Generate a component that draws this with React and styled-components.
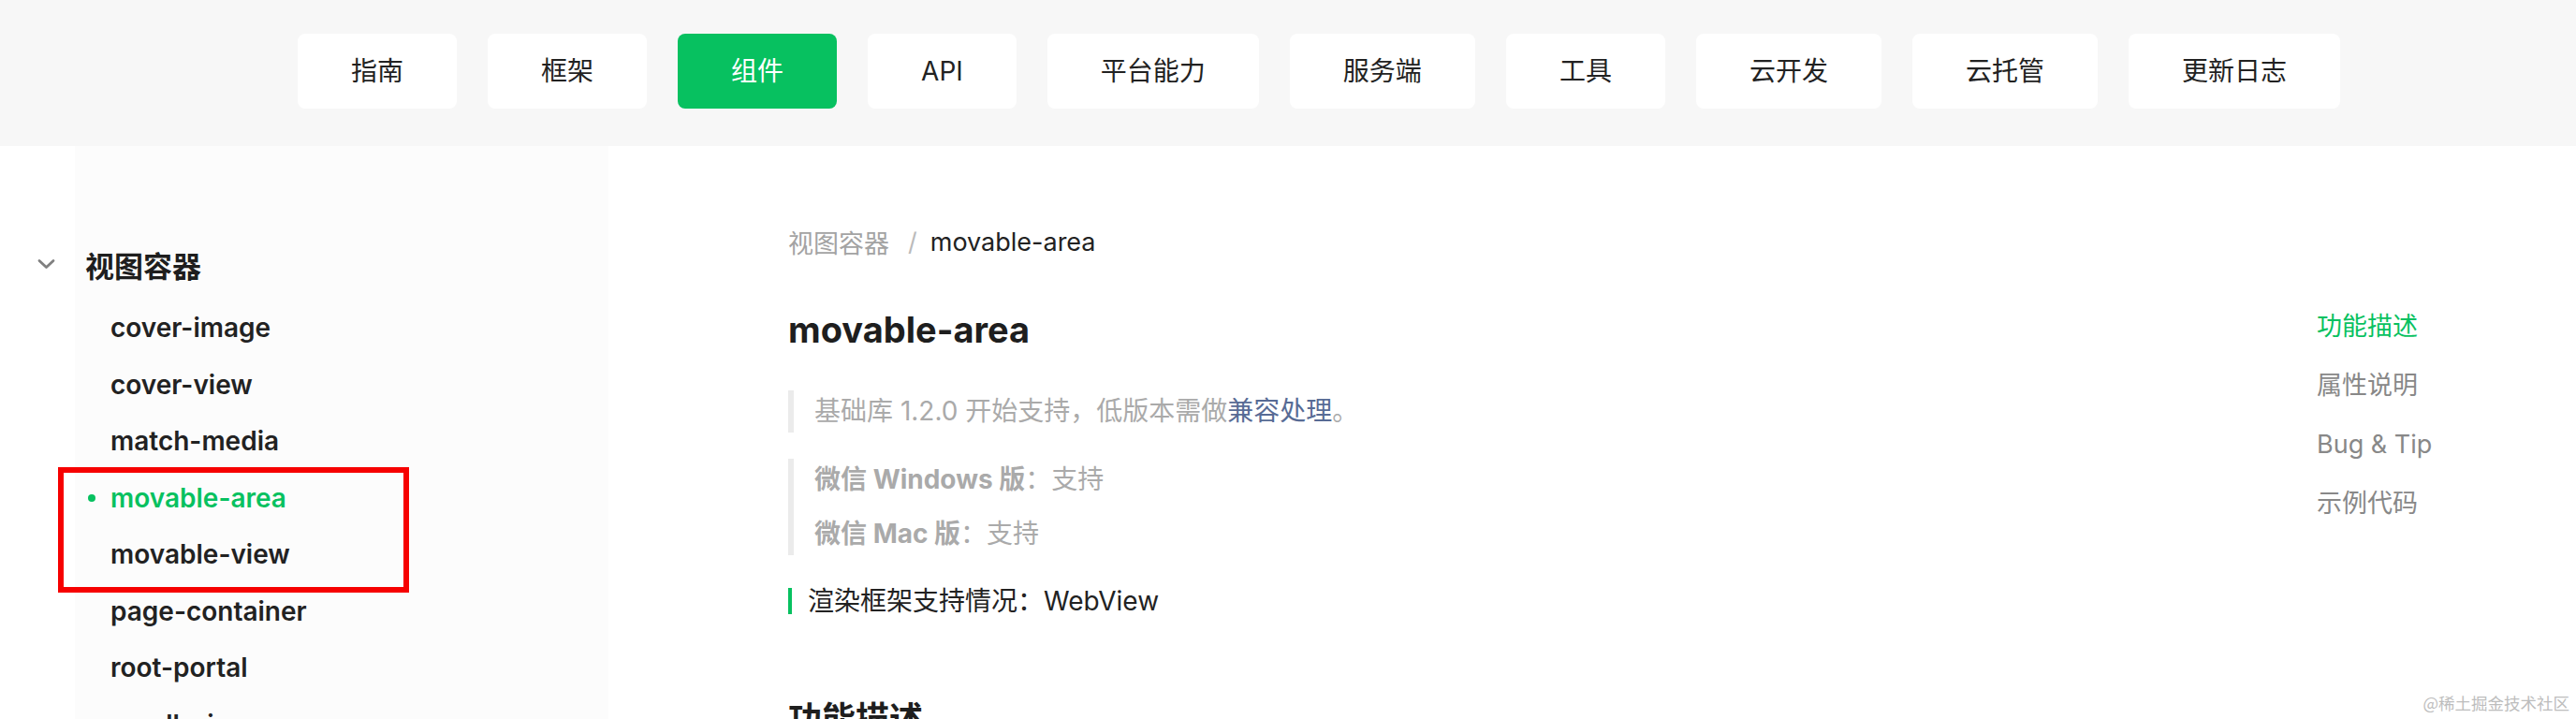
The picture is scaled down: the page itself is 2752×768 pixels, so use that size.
import React from "react";
import styled, { createGlobalStyle } from "styled-components";

const GlobalStyle = createGlobalStyle`
  html, body {
    margin: 0;
    padding: 0;
    background: #fff;
  }
  body {
    font-family: Inter, "Noto Sans CJK SC", "Noto Sans", sans-serif;
    color: #222;
    -webkit-font-smoothing: antialiased;
  }
  *, *::before, *::after {
    box-sizing: border-box;
  }
`;

const green = "#07c160";

const Page = styled.div`
  position: relative;
  height: 100vh;
  display: flex;
  flex-direction: column;
  overflow: hidden;
`;

const Header = styled.header`
  height: 156px;
  flex-shrink: 0;
  background: #f7f7f7;
  display: flex;
  justify-content: center;
  align-items: flex-start;
  padding: 36px 0 0 66px;
  gap: 33px;
`;

const NavButton = styled.a`
  height: 80px;
  padding: 0 57px;
  display: flex;
  align-items: center;
  border-radius: 8px;
  font-size: 28px;
  line-height: 1;
  background: ${(p) => (p.$active ? green : "#fff")};
  color: ${(p) => (p.$active ? "#fff" : "#222")};
  text-decoration: none;
  white-space: nowrap;
`;

const Body = styled.div`
  flex: 1;
  display: flex;
`;

const Sidebar = styled.aside`
  width: 650px;
  flex-shrink: 0;
  background: linear-gradient(to right, #fff 80px, #fcfcfc 80px);
  padding-top: 96px;
`;

const GroupTitle = styled.div`
  height: 60px;
  display: flex;
  align-items: center;
  padding-left: 40px;
  margin-bottom: 8px;
  font-size: 31px;
  font-weight: 700;
  color: #1e1e1e;

  svg {
    margin-right: 32px;
  }
`;

const Item = styled.div`
  height: 60.5px;
  display: flex;
  align-items: center;
  padding-left: 94px;
  font-size: 28px;
  font-weight: 600;
  color: ${(p) => (p.$active ? green : "#222")};
`;

const Marker = styled.span`
  width: 8px;
  height: 8px;
  border-radius: 50%;
  margin-right: 16px;
  background: ${(p) => (p.$active ? green : "transparent")};
`;

const Highlight = styled.div`
  position: relative;

  &::after {
    content: "";
    position: absolute;
    left: 62px;
    width: 375px;
    top: -3px;
    bottom: -10px;
    border: 6px solid #f60000;
    pointer-events: none;
  }
`;

const Main = styled.main`
  flex: 1;
  padding: 82px 0 0 192px;
`;

const Breadcrumb = styled.div`
  display: flex;
  align-items: center;
  height: 40px;
  font-size: 27px;
  color: #a3a3a3;
`;

const Sep = styled.span`
  margin: 0 14px 0 20px;
  color: #bbb;
`;

const Current = styled.span`
  color: #222;
`;

const Title = styled.h1`
  margin: 46px 0 0;
  font-size: 38px;
  line-height: 56px;
  font-weight: 700;
  color: #1e1e1e;
`;

const Quote = styled.blockquote`
  margin: ${(p) => p.$mt}px 0 0;
  padding: 0 0 0 22px;
  border-left: 6px solid #ebebeb;
  color: #aaa;
  font-size: 28px;

  p {
    margin: 0;
    line-height: 45px;
  }

  p + p {
    margin-top: 13px;
  }

  strong {
    font-weight: 700;
  }

  a {
    color: #576b95;
    text-decoration: none;
  }
`;

const RenderNote = styled.div`
  margin-top: 35px;
  border-left: 4px solid ${green};
  padding-left: 17px;
  height: 28px;
  line-height: 28px;
  font-size: 28px;
  color: #222;
`;

const SectionTitle = styled.h2`
  margin: 87px 0 0;
  font-size: 36px;
  line-height: 50px;
  font-weight: 700;
  color: #1e1e1e;
`;

const Toc = styled.nav`
  width: 277px;
  flex-shrink: 0;
  padding-top: 161px;
`;

const TocLink = styled.div`
  height: 63px;
  line-height: 63px;
  font-size: 27px;
  color: ${(p) => (p.$active ? green : "#888")};
`;

const Watermark = styled.div`
  position: absolute;
  right: 7px;
  bottom: 5px;
  font-family: "Noto Sans CJK SC", sans-serif;
  font-size: 17.5px;
  color: #bdbdbd;
  text-shadow: 0 0 2px #fff;
`;

const Chevron = () => (
  <svg width="19" height="12" viewBox="0 0 19 12">
    <polyline
      points="2,2.5 9.5,9.5 17,2.5"
      fill="none"
      stroke="#808080"
      strokeWidth="2.8"
      strokeLinecap="round"
      strokeLinejoin="round"
    />
  </svg>
);

const navs = ["指南", "框架", "组件", "API", "平台能力", "服务端", "工具", "云开发", "云托管", "更新日志"];

const before = ["cover-image", "cover-view", "match-media"];
const after = ["page-container", "root-portal", "scroll-view"];

const toc = ["功能描述", "属性说明", "Bug & Tip", "示例代码"];

const App = () => {
  return (
    <Page>
      <GlobalStyle />
      <Header>
        {navs.map((n) => (
          <NavButton key={n} $active={n === "组件"}>{n}</NavButton>
        ))}
      </Header>
      <Body>
        <Sidebar>
          <GroupTitle>
            <Chevron />
            视图容器
          </GroupTitle>
          {before.map((name) => (
            <Item key={name}><Marker />{name}</Item>
          ))}
          <Highlight>
            <Item $active><Marker $active />movable-area</Item>
            <Item><Marker />movable-view</Item>
          </Highlight>
          {after.map((name) => (
            <Item key={name}><Marker />{name}</Item>
          ))}
        </Sidebar>
        <Main>
          <Breadcrumb>
            视图容器
            <Sep>/</Sep>
            <Current>movable-area</Current>
          </Breadcrumb>
          <Title>movable-area</Title>
          <Quote $mt={37}>
            <p>基础库 1.2.0 开始支持，低版本需做<a>兼容处理</a>。</p>
          </Quote>
          <Quote $mt={28}>
            <p><strong>微信 Windows 版</strong>：支持</p>
            <p><strong>微信 Mac 版</strong>：支持</p>
          </Quote>
          <RenderNote>渲染框架支持情况：WebView</RenderNote>
          <SectionTitle>功能描述</SectionTitle>
        </Main>
        <Toc>
          {toc.map((t, i) => (
            <TocLink key={t} $active={i === 0}>{t}</TocLink>
          ))}
        </Toc>
      </Body>
      <Watermark>@稀土掘金技术社区</Watermark>
    </Page>
  );
};

export default App;
